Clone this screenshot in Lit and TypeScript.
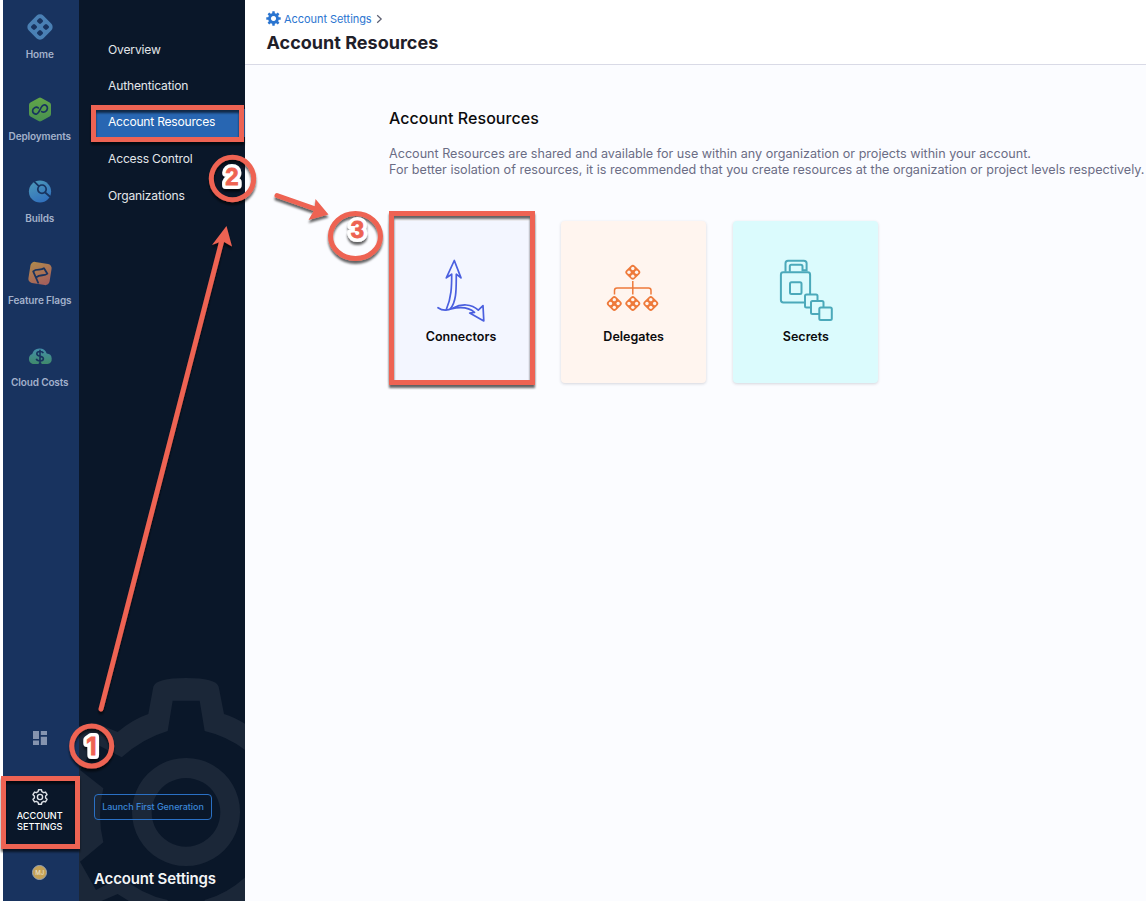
import { LitElement, html, svg, css } from "lit";
import { customElement } from "lit/decorators.js";

const clover = (x: number, y: number, s: number) => svg`
  <g transform="translate(${x} ${y}) scale(${s})">
    <rect x="-5.2" y="-5.2" width="10.4" height="10.4" rx="2.4" transform="rotate(45)" fill="currentColor"/>
    <g class="holes"><circle cx="0" cy="-3.3" r="1.45"/><circle cx="0" cy="3.3" r="1.45"/><circle cx="-3.3" cy="0" r="1.45"/><circle cx="3.3" cy="0" r="1.45"/></g>
  </g>`;

const homeIcon = html`<svg width="28" height="28" viewBox="-14 -14 28 28">
  <rect x="-10.4" y="-10.4" width="20.8" height="20.8" rx="5" transform="rotate(45)" fill="#4a80b4"/>
  <g fill="#18335f">
    <rect x="-2.5" y="-2.5" width="5" height="5" rx="1.3" transform="translate(0 -6) rotate(45)"/>
    <rect x="-2.5" y="-2.5" width="5" height="5" rx="1.3" transform="translate(0 6) rotate(45)"/>
    <rect x="-2.5" y="-2.5" width="5" height="5" rx="1.3" transform="translate(-6 0) rotate(45)"/>
    <rect x="-2.5" y="-2.5" width="5" height="5" rx="1.3" transform="translate(6 0) rotate(45)"/>
  </g></svg>`;

const deployIcon = html`<svg width="28" height="28" viewBox="-14 -14.5 28 28">
  <defs><linearGradient id="g" x1="0" y1="0" x2="0" y2="1"><stop offset="0" stop-color="#62a548"/><stop offset="1" stop-color="#489050"/></linearGradient></defs>
  <path d="M-1.4-11.6Q0-12.4 1.4-11.6L9.6-7Q11-6.2 11-4.6V4.6Q11 6.2 9.6 7L1.4 11.6Q0 12.4-1.4 11.6L-9.6 7Q-11 6.2-11 4.6V-4.6Q-11-6.2-9.6-7Z" fill="url(#g)"/>
  <path d="M-1.7-1.600C-3.800-3.200-7.500-1.600-7.400 1.400C-7.300 3.900-5 5-3.200 4.500C-.3 3.700.3-3.600 3.800-4.500C6-4.900 7.700-3.100 7.400-.9C7 2.400 3.600 3.400 1.700 2.100" fill="none" stroke="#18335f" stroke-width="1.7" stroke-linecap="round"/></svg>`;

const buildIcon = html`<svg width="28" height="28" viewBox="-14 -14.5 28 28">
  <defs><linearGradient id="b" x1="0" y1="0" x2="0.5" y2="1"><stop offset="0" stop-color="#4f9cb9"/><stop offset="1" stop-color="#3272bd"/></linearGradient></defs>
  <circle r="11.1" fill="url(#b)"/>
  <g fill="none" stroke="#18335f" stroke-width="1.7"><circle cx="2" cy="-2.3" r="4.2"/><path d="M-6.5-10.6L-1.2-5.3M5.2 1L11.5 6.5"/></g></svg>`;

const flagIcon = html`<svg width="28" height="28" viewBox="-14 -14.5 28 28">
  <defs><linearGradient id="f" x1="0" y1="0" x2="0.7" y2="1"><stop offset="0" stop-color="#b18b4b"/><stop offset="1" stop-color="#a4605c"/></linearGradient></defs>
  <rect x="-10.7" y="-10.7" width="21.4" height="21.4" rx="4.2" transform="rotate(9)" fill="url(#f)"/>
  <path d="M-1.5 10L-6.8-2.2C-3.4-5.5 .8-2.5 4-5.2L7.4 .2C4.2 3.2 0 .2-3.7 3.8" fill="none" stroke="#18335f" stroke-width="1.8" stroke-linejoin="round"/></svg>`;

const costIcon = html`<svg width="28" height="28" viewBox="-14 -14 28 28">
  <defs><linearGradient id="c" x1="0" y1="0" x2="0" y2="1"><stop offset="0" stop-color="#438eaa"/><stop offset="1" stop-color="#408a6b"/></linearGradient></defs>
  <path d="M-7.2 9A5.3 5.3 0 0 1-7.8-1A7.6 7.6 0 0 1 6.7-1.5A5.3 5.3 0 0 1 7.4 9H1.5V7.8H-1.3V9Z" fill="url(#c)"/>
  <path d="M3.3-1.9C2.5-4-3.1-4.2-3.2-1.3C-3.3 1.9 3.5.5 3.4 3.7C3.3 6.7-3 6.5-3.7 3.7M0-5.2V8.9" fill="none" stroke="#18335f" stroke-width="1.6"/></svg>`;

const railItems = [
  { icon: homeIcon, label: "Home" },
  { icon: deployIcon, label: "Deployments" },
  { icon: buildIcon, label: "Builds" },
  { icon: flagIcon, label: "Feature Flags" },
  { icon: costIcon, label: "Cloud Costs" },
];

const connectorIcon = html`<svg width="60" height="72" viewBox="-0.5 0 60 72" fill="none" stroke="#4a5fdf" stroke-width="1.7" stroke-linejoin="round" stroke-linecap="round">
  <path d="M6.5 55.7C11 58.8 16.5 58.4 21 56.2C30 51.6 40 51.6 46.8 58.2L51.5 53.7L52.3 68.9L38.2 61L43 60.3C37.5 55.2 29 54.6 19.5 56.8"/>
  <path d="M14.8 57.500C20 46 20.2 34 20.2 22.2L14.8 25.9L22.8 8.5L29.500 25.9L24.8 22.2C24.6 35 25.6 48.5 18.8 56.9"/></svg>`;

const delegateIcon = html`<svg class="delegates" width="60" height="72" viewBox="1.2 0 60 72">
  ${clover(30, 20.3, 1.16)}${clover(11.5, 51.5, 1.16)}${clover(30, 51.5, 1.16)}${clover(48, 51.5, 1.16)}
  <path d="M30 29V42.5M11.7 42.5V38.5Q11.7 36 14.2 36H45.8Q48.2 36 48.2 38.5V42.5" fill="none" stroke="currentColor" stroke-width="1.5"/></svg>`;

const secretIcon = html`<svg width="60" height="72" viewBox="0 0 60 72" fill="none" stroke="#4ba9ba" stroke-width="2">
  <path d="M9.5 19.8V11.3Q9.5 8.8 12 8.8H27.8Q30.6 8.8 30.6 11.3V18.2H26.5V14.5Q26.5 12.8 24.8 12.8H15.3Q13.8 12.8 13.8 14.5V19.8"/>
  <path d="M28.5 50.5H7.3Q4.9 50.5 4.9 48.1V22.7Q4.9 20.3 7.3 20.3H31.7Q34.1 20.3 34.1 22.7V42"/>
  <rect x="14" y="30.3" width="11.5" height="11.7" rx="1.5"/>
  <g fill="#dbfbfd"><rect x="29" y="42.6" width="12.5" height="13" rx="1.5"/><rect x="35" y="49" width="12.5" height="13" rx="1.5"/><rect x="43.3" y="55.4" width="12.5" height="12.5" rx="1.5"/></g></svg>`;

const gearPath = (n: number, ro: number, ri: number) => {
  const pts: string[] = [];
  const step = (Math.PI * 2) / n;
  for (let i = 0; i < n; i++) {
    const a = i * step - Math.PI / 2;
    for (const [k, r] of [[-0.32, ri], [-0.2, ro], [0.2, ro], [0.32, ri]]) {
      pts.push(`${(Math.cos(a + k * step) * r).toFixed(2)} ${(Math.sin(a + k * step) * r).toFixed(2)}`);
    }
  }
  return `M${pts.join("L")}Z`;
};

@customElement("app-rail")
class AppRail extends LitElement {
  static styles = css`
    :host { display: flex; flex-direction: column; width: 76px; padding-right: 2.6px; box-sizing: border-box; background: #18335f; font-family: Inter, sans-serif; }
    .item { display: flex; flex-direction: column; align-items: center; height: 82px; padding-top: 13px; box-sizing: border-box; }
    .label { margin-top: 7px; font-size: 10px; font-weight: 600; line-height: 13px; color: #a3b1cb; white-space: nowrap; letter-spacing: -0.14px; }
    .top { flex: 1; }
    .grid { display: flex; justify-content: center; height: 46px; padding-left: 1px; }
    .settings { display: flex; flex-direction: column; align-items: center; height: 73px; margin-right: -2.6px; padding: 12px 2.6px 0 0; box-sizing: border-box; background: #0a1729; color: #fff; font-size: 9.1px; font-weight: 500; line-height: 11px; text-align: center; }
    .settings svg { margin-bottom: 4px; }
    .user { display: flex; justify-content: center; height: 52px; padding-top: 16px; box-sizing: border-box; }
    .avatar { width: 13px; height: 13px; border-radius: 50%; background: #c4a155; border: 1px solid #9ba4b0; color: #e8dfc6; font-size: 6px; line-height: 13px; text-align: center; font-weight: 500; }
  `;
  render() {
    return html`
      <div class="top">${railItems.map((i) => html`<div class="item">${i.icon}<span class="label">${i.label}</span></div>`)}</div>
      <div class="grid"><svg width="16" height="16" viewBox="0 0 16 16" fill="#8594af"><path d="M1 1H7V9H1ZM8.8 1H15V5H8.8ZM1 10.4H7V15H1ZM8.8 6.8H15V15H8.8Z"/></svg></div>
      <div class="settings">
        <svg width="18" height="18" viewBox="-9 -9 18 18" fill="none" stroke="#dfe3e8" stroke-width="1.4" stroke-linejoin="round"><path d="${gearPath(6, 7.4, 5.7)}"/><circle r="2.6"/></svg>
        <span>ACCOUNT<br>SETTINGS</span>
      </div>
      <div class="user"><div class="avatar">MJ</div></div>`;
  }
}

@customElement("app-nav")
class AppNav extends LitElement {
  static styles = css`
    :host { display: grid; width: 166px; background: #0a1729; font-family: Inter, sans-serif; color: #e3e6ea; overflow: hidden; }
    .mark, .content { grid-area: 1 / 1; }
    .mark { align-self: end; }
    .content { display: flex; flex-direction: column; padding-top: 31px; z-index: 1; }
    .link { height: 36.5px; display: flex; align-items: center; padding-left: 29px; font-size: 12.1px; white-space: nowrap; letter-spacing: -0.18px; }
    .link.on { background: linear-gradient(#2866b2, #2866b2) 14px 5px / 152px 28px no-repeat; color: #fff; letter-spacing: -0.24px; padding-bottom: 1px; box-sizing: border-box; }
    .fill { flex: 1; }
    .launch { margin: 0 0 50.5px 15px; width: 118px; height: 26px; box-sizing: border-box; border: 1px solid #2a70c4; border-radius: 4px; background: transparent; color: #3b86d6; font: 500 9px/24px Inter, sans-serif; letter-spacing: -0.06px; text-align: center; white-space: nowrap; padding: 0; }
    .title { margin: 0 0 13px 15px; font-size: 15px; line-height: 18px; font-weight: 600; color: #f3f4f6; white-space: nowrap; letter-spacing: -0.14px; }
  `;
  render() {
    return html`
      <svg class="mark" width="166" height="231" viewBox="9 0 498 693" fill="#1b2738">
        <path fill-rule="evenodd" d="M217 132L232 50Q240 24 330 24Q420 24 428 50L444 132Q480 143 520 170V700H170L125 672L60 700H0V170L60 160L125 186Q170 148 217 132ZM275 183Q200 205 137 262L60 222L12 300L82 355Q62 435 82 517L12 575L60 660L137 620Q195 673 275 690V700H386V690Q460 670 520 610V250Q460 200 386 183L371 92H290Z"/>
        <path fill-rule="evenodd" d="M330 264a162 162 0 1 0 .1 0ZM330 324a103 103 0 1 1-.1 0Z"/>
      </svg>
      <div class="content">
        <div class="link">Overview</div>
        <div class="link">Authentication</div>
        <div class="link on">Account Resources</div>
        <div class="link">Access Control</div>
        <div class="link">Organizations</div>
        <div class="fill"></div>
        <button class="launch">Launch First Generation</button>
        <div class="title">Account Settings</div>
      </div>`;
  }
}

@customElement("app-root")
class AppRoot extends LitElement {
  static styles = css`
    :host { display: flex; position: relative; width: 1146px; height: 902px; box-sizing: border-box; padding: 0 0 1px 3px; background: #fff; overflow: hidden; font-family: Inter, sans-serif; }
    main { flex: 1; min-width: 0; background: #fbfcff; }
    header { height: 65px; box-sizing: border-box; background: #fff; border-bottom: 1px solid #d9dae6; padding: 11px 0 0 21px; }
    .crumb { display: flex; align-items: center; height: 15px; font-size: 11px; color: #2b75d0; white-space: nowrap; }
    .crumb .txt { margin: 0 4px 0 3px; letter-spacing: -0.06px; }
    h1 { margin: 6px 0 0 0.5px; font-size: 18px; line-height: 22px; font-weight: 700; color: #1f2029; letter-spacing: 0.02px; white-space: nowrap; }
    .body { padding: 43px 0 0 144px; }
    h2 { margin: 0; font-size: 16px; line-height: 20px; font-weight: 500; color: #0b0b0d; white-space: nowrap; letter-spacing: 0.06px; }
    p { margin: 18px 0 0; font-size: 12.6px; line-height: 16px; color: #6b6d85; white-space: nowrap; }
    .wide { letter-spacing: 0.012px; }
    .cards { display: flex; gap: 27.2px; margin-top: 43px; }
    .card { width: 145px; height: 162px; border-radius: 4px; box-shadow: 0 1px 3px rgba(40, 41, 61, 0.18); display: flex; flex-direction: column; align-items: center; padding-top: 31px; box-sizing: border-box; font-size: 12.5px; font-weight: 600; line-height: 16px; color: #0b0b0d; }
    .card svg { margin-bottom: 5px; }
    .blue { background: #f3f6ff; padding-right: 1px; }
    .peach { background: #fff5ef; }
    .cyan { background: #dbfbfd; }
    .delegates { color: #ee7a3b; }
    .holes { fill: #fff5ef; }
    .notes { position: absolute; left: 0; top: 0; z-index: 2; pointer-events: none; }
    .mark { fill: none; stroke: #ee6352; stroke-width: 5; }
    .num { font: 700 24px "Liberation Sans", sans-serif; text-anchor: middle; }
    .num.slim { font-family: Inter, sans-serif; }
    .halo { fill: #fff; stroke: #fff; stroke-width: 8; stroke-linejoin: round; }
    .digit { fill: #ee6352; stroke: #ee6352; stroke-width: 0.8; }
  `;
  note(x: number, y: number, n: string) {
    const face = n === "1" ? "slim" : "";
    return svg`<text class="num halo ${face}" x=${x} y=${y} filter="url(#shadow)">${n}</text><text class="num digit ${face}" x=${x} y=${y}>${n}</text>`;
  }
  render() {
    return html`
      <app-rail></app-rail>
      <app-nav></app-nav>
      <main>
        <header>
          <div class="crumb">
            <svg width="15" height="15" viewBox="-7.5 -7.5 15 15"><path fill="#2b75d0" fill-rule="evenodd" d="${gearPath(8, 7.3, 5.4)}M0-2.6A2.6 2.6 0 1 0 .01-2.6Z"/></svg>
            <span class="txt">Account Settings</span>
            <svg width="7" height="10" viewBox="0 0 7 10" fill="none" stroke="#5c5e70" stroke-width="1.2"><path d="M1.2 1.3L5.2 5L1.2 8.7"/></svg>
          </div>
          <h1>Account Resources</h1>
        </header>
        <div class="body">
          <h2>Account Resources</h2>
          <p>Account Resources are shared and available for use within any organization or projects within your account.<br><span class="wide">For better isolation of resources, it is recommended that you create resources at the organization or project levels respectively.</span></p>
          <div class="cards">
            <div class="card blue">${connectorIcon}<span>Connectors</span></div>
            <div class="card peach">${delegateIcon}<span>Delegates</span></div>
            <div class="card cyan">${secretIcon}<span>Secrets</span></div>
          </div>
        </div>
      </main>
      <svg class="notes" width="1146" height="902" viewBox="0 0 1146 902">
        <defs><filter id="shadow" filterUnits="userSpaceOnUse" x="0" y="0" width="1146" height="902"><feDropShadow dx="0" dy="3" stdDeviation="1.2" flood-color="#000" flood-opacity="0.6"/></filter></defs>
        <g filter="url(#shadow)">
          <rect class="mark" x="93.5" y="107.5" width="148" height="32"/>
          <rect class="mark" x="3.5" y="778.5" width="74" height="68"/>
          <rect class="mark" x="391.5" y="213.5" width="141" height="169"/>
          <circle class="mark" cx="91.7" cy="746" r="20"/>
          <circle class="mark" cx="232.5" cy="178.5" r="21.2"/>
          <ellipse class="mark" cx="355.5" cy="236" rx="25" ry="22.5"/>
          <path class="mark" stroke-linecap="round" d="M101 709L222 240"/>
          <path fill="#ee6352" d="M226.5 226L232 246.5L222.5 241L212 245Z"/>
          <path class="mark" stroke-linecap="round" d="M277 195.5L317 209.5"/>
          <path fill="#ee6352" d="M328.5 214.5L308.5 220L314.5 209.5L315.5 199Z"/>
        </g>
        ${this.note(91.5, 755, "1")}${this.note(232, 185, "2")}${this.note(357.5, 238, "3")}
      </svg>`;
  }
}
